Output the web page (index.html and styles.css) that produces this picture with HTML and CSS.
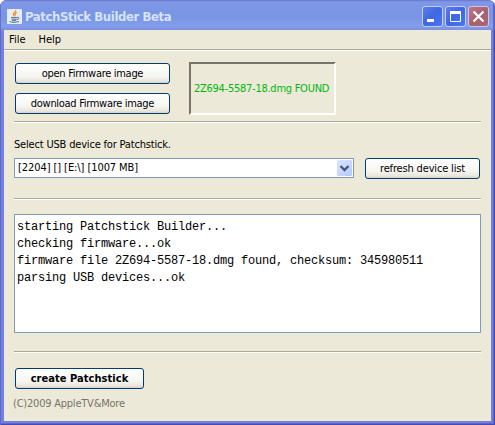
FILE: index.html
```html
<!DOCTYPE html>
<html lang="en">
<head>
<meta charset="utf-8">
<title>PatchStick Builder Beta</title>
<link rel="stylesheet" href="styles.css">
</head>
<body>
<div class="window">
  <header class="titlebar">
    <svg class="app-icon" width="15" height="15" viewBox="0 0 15 15">
      <rect width="15" height="15" rx="1" fill="#e9ecee"/>
      <path d="M8.6 1.2c1 1.7-3 2.6-2.2 4.3.3.8 1.1 1.2 1 2M9.8 3.5C7.6 4.6 8 5.5 8.6 6.4" fill="none" stroke="#ef8a2c" stroke-width="1.3"/>
      <path d="M4 8.6h6.4M4.5 10.2h5.2M5 11.6h4.2M10.3 8.4c2.6-.6 2 2-.4 2.3M2.5 12.5c2 1.1 7 1.1 9.5 0" fill="none" stroke="#4f7190" stroke-width="1"/>
    </svg>
    <h1 class="title">PatchStick Builder Beta</h1>
    <div class="controls">
      <button class="control" aria-label="Minimize"><svg width="19" height="19"><path d="M4 13.5h7" stroke="#fff" stroke-width="3"/></svg></button>
      <button class="control" aria-label="Maximize"><svg width="19" height="19"><path d="M4.5 5v9.5h10V5" fill="none" stroke="#fff"/><path d="M4 5.5h11" stroke="#fff" stroke-width="3"/></svg></button>
      <button class="control close" aria-label="Close"><svg width="19" height="19"><path d="M4.5 4.5l10 10M14.5 4.5l-10 10" stroke="#fff" stroke-width="2.2"/></svg></button>
    </div>
  </header>
  <nav class="menu"><span>File</span><span>Help</span></nav>
  <main class="content">
    <section class="firmware">
      <div class="firmware-actions">
        <button class="button">open Firmware image</button>
        <button class="button">download Firmware image</button>
      </div>
      <div class="status"><span>2Z694-5587-18.dmg FOUND</span></div>
    </section>
    <section class="device">
      <label class="device-label">Select USB device for Patchstick.</label>
      <div class="device-row">
        <div class="combo">
          <span>[2204] [] [E:\] [1007 MB]</span>
          <span class="combo-arrow"><svg width="15" height="16"><path d="M3.5 6l4 4 4-4" fill="none" stroke="#46577f" stroke-width="2.4"/></svg></span>
        </div>
        <button class="button refresh">refresh device list</button>
      </div>
    </section>
    <section class="log-section">
      <pre class="log">starting Patchstick Builder...
checking firmware...ok
firmware file 2Z694-5587-18.dmg found, checksum: 345980511
parsing USB devices...ok</pre>
    </section>
    <footer class="footer">
      <button class="button create">create Patchstick</button>
      <p class="copyright">(C)2009 AppleTV&amp;More</p>
    </footer>
  </main>
</div>
</body>
</html>
```
FILE: styles.css
```css
* { box-sizing: border-box; }
body {
  margin: 0;
  background: #fff;
  color: #000;
  font: 11px/14px "DejaVu Sans Condensed", "DejaVu Sans", sans-serif;
}
button { font: inherit; color: inherit; padding: 0; }
.window {
  width: 495px;
  height: 425px;
  display: flex;
  flex-direction: column;
  padding: 0 4px 4px;
  border-radius: 7px 7px 0 0;
  overflow: hidden;
  background: #7481dc;
  box-shadow: inset 1px 0 #5c66cc, inset -1px -1px #464bb3, inset -2px -2px #5d65c9;
}
.titlebar {
  height: 30px;
  flex: none;
  display: flex;
  align-items: flex-start;
  margin: 0 -4px;
  padding: 6px 6px 0 7px;
  background: linear-gradient(#6676d2 0, #8297e2 2px, #7c97e7 5px, #7a95e3 18px, #829fec 26px, #7b90de 30px);
  box-shadow: inset 1px 0 #6670cc, inset -2px 0 #5b65c8;
}
.app-icon { margin: 3px 3px 0 0; }
.title {
  margin: 2px 0 0;
  font-size: 13px;
  line-height: 18px;
  letter-spacing: -0.4px;
  color: #d7e3fb;
  white-space: nowrap;
}
.controls { display: flex; gap: 2px; margin-left: auto; }
.control {
  width: 21px;
  height: 21px;
  border: 1px solid #c1cff7;
  border-radius: 3px;
  background: linear-gradient(135deg, #5d7ee8, #3f67e4 50%, #4c78ef);
}
.control svg { display: block; }
.close { background: linear-gradient(135deg, #bc7788, #a9606e 50%, #ad6572); border-color: #d2c5e4; }
.menu {
  height: 21px;
  flex: none;
  display: flex;
  gap: 13px;
  padding: 3px 5px 0;
  background: #ece9d8;
  border-bottom: 1px solid #fff;
  box-shadow: inset 0 -1px #aca899;
}
.content {
  flex: 1;
  min-height: 0;
  background: #ece9d8;
  padding: 10px 10px 0;
}
.firmware, .device, .log-section {
  width: 467px;
  border-bottom: 1px solid #fff;
  box-shadow: inset 0 -1px #aca899;
}
.firmware { height: 62px; display: flex; gap: 19px; padding-left: 1px; }
.firmware-actions { width: 155px; display: flex; flex-direction: column; gap: 9px; padding-top: 2px; }
.button {
  height: 21px;
  display: flex;
  align-items: center;
  justify-content: center;
  padding-top: 1px;
  border: 1px solid #003c74;
  border-radius: 3px;
  background: linear-gradient(#fff, #f5f5f1 65%, #e8e5dc 90%, #d8d0c4);
  letter-spacing: -0.3px;
  white-space: nowrap;
}
.status {
  width: 147px;
  height: 53px;
  margin-top: 1px;
  display: flex;
  align-items: center;
  padding: 1px 0 0 3px;
  border: 2px solid;
  border-color: #77756b #fff #fff #77756b;
  color: #00b80c;
  letter-spacing: -0.26px;
  white-space: nowrap;
}
.device { height: 77px; padding-top: 15px; }
.device-label { display: block; letter-spacing: -0.18px; white-space: nowrap; }
.device-row { display: flex; gap: 11px; margin-top: 6px; }
.combo {
  width: 340px;
  height: 20px;
  display: flex;
  align-items: center;
  justify-content: space-between;
  padding: 1px 1px 1px 3px;
  border: 1px solid #7f9db9;
  background: #fff;
  letter-spacing: -0.08px;
  line-height: 16px;
  white-space: nowrap;
}
.combo-arrow {
  width: 15px;
  height: 16px;
  border-radius: 1px;
  background: linear-gradient(135deg, #dce6ff, #b4c8f8);
}
.combo-arrow svg { display: block; }
.refresh { width: 115px; letter-spacing: -0.16px; }
.log-section { height: 153px; padding-top: 14px; }
.log {
  width: 467px;
  height: 119px;
  margin: 0;
  padding: 4px 2px 2px;
  border: 1px solid #7f9db9;
  background: #fff;
  font: 12px/17px "Liberation Mono", monospace;
  letter-spacing: -0.2px;
}
.footer { padding: 15px 0 0 1px; }
.create { width: 129px; font-weight: bold; letter-spacing: 0.05px; }
.copyright { margin: 8px 0 0 -2px; color: #77756b; letter-spacing: -0.22px; }
```
